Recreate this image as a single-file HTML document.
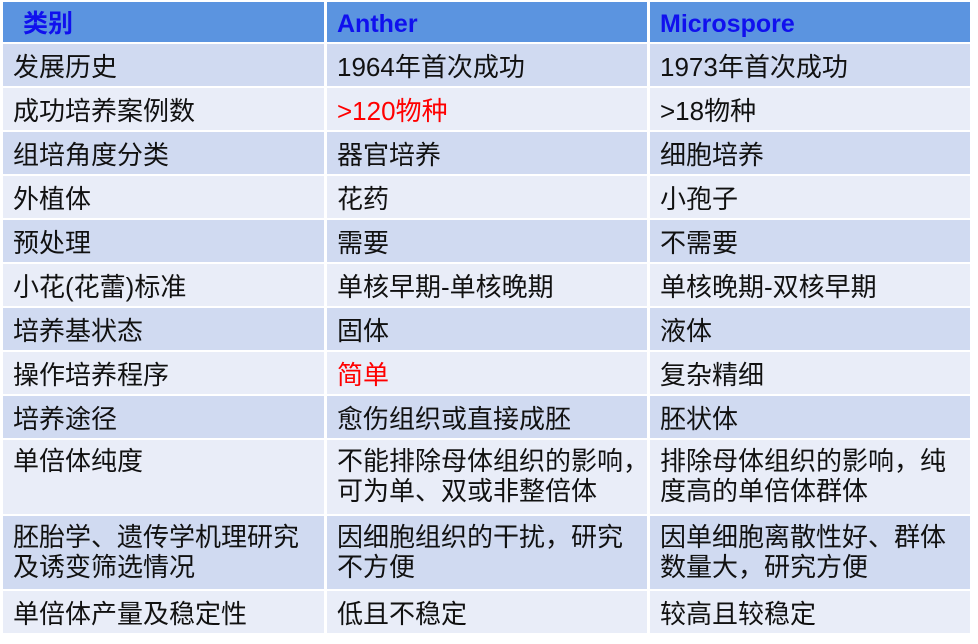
<!DOCTYPE html>
<html><head><meta charset="utf-8"><style>
body{margin:0;width:978px;height:644px;background:#fff;overflow:hidden;font-family:"Liberation Sans","Noto Sans CJK SC",sans-serif;}
.c{position:absolute;box-sizing:border-box;padding-left:10px;padding-top:8px;font-size:26px;color:#111;line-height:30px;white-space:nowrap}
.h{background:#5b94e0;color:#1010ee;font-weight:bold;font-size:25px;padding-top:7px}
.o{background:#d0daf1}.e{background:#e9edf8}
.r{color:#f00}
</style></head><body>
<div id="t"></div>
<script>
var rows=[
["类别","Anther","Microspore"],
["发展历史","1964年首次成功","1973年首次成功"],
["成功培养案例数","<span class=r>&gt;120物种</span>","&gt;18物种"],
["组培角度分类","器官培养","细胞培养"],
["外植体","花药","小孢子"],
["预处理","需要","不需要"],
["小花(花蕾)标准","单核早期-单核晚期","单核晚期-双核早期"],
["培养基状态","固体","液体"],
["操作培养程序","<span class=r>简单</span>","复杂精细"],
["培养途径","愈伤组织或直接成胚","胚状体"],
["单倍体纯度","不能排除母体组织的影响，<br>可为单、双或非整倍体","排除母体组织的影响，纯<br>度高的单倍体群体"],
["胚胎学、遗传学机理研究<br>及诱变筛选情况","因细胞组织的干扰，研究<br>不方便","因单细胞离散性好、群体<br>数量大，研究方便"],
["单倍体产量及稳定性","低且不稳定","较高且较稳定"]];
var tops=[2,44,88,132,176,220,264,308,352,396,440,516,591];
var hs=[40,42,42,42,42,42,42,42,42,42,74,73,42];
var xs=[[3,321],[327,320],[650,320]];
var s="";
rows.forEach(function(r,i){r.forEach(function(t,j){
var cls=i==0?"h":(i%2?"o":"e");
var pt=(i==10||i==11)?"padding-top:6px;":"";
s+='<div class="c '+cls+'" style="'+pt+'left:'+xs[j][0]+'px;width:'+xs[j][1]+'px;top:'+tops[i]+'px;height:'+hs[i]+'px">'+(i==0&&j==0?'<span style="padding-left:10px">'+t+'</span>':t)+'</div>';});});
document.getElementById("t").innerHTML=s;
</script>
</body></html>
